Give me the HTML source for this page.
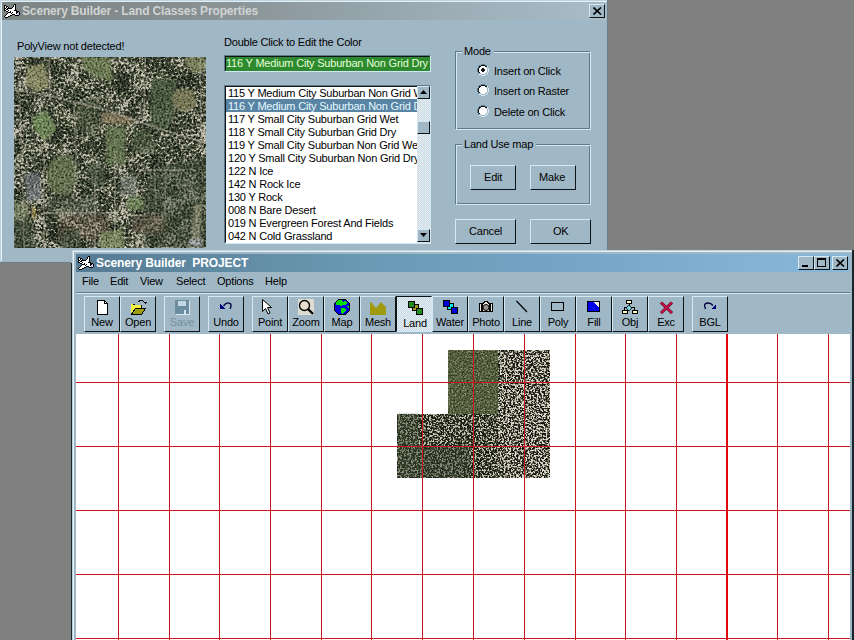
<!DOCTYPE html>
<html><head><meta charset="utf-8"><style>
html,body{margin:0;padding:0}
body{width:854px;height:640px;overflow:hidden;position:relative;background:#808080;font-family:"Liberation Sans",sans-serif}
.b,.t{position:absolute;box-sizing:border-box}
.t{white-space:pre}
</style></head><body>
<svg width="0" height="0" style="position:absolute"><defs>
<filter id="fu" x="0" y="0" width="100%" height="100%" color-interpolation-filters="sRGB">
  <feTurbulence type="fractalNoise" baseFrequency="0.06" numOctaves="2" seed="11"/>
  <feColorMatrix type="matrix" values="1 0 0 0 0  1 0 0 0 0  1 0 0 0 0  0 0 0 0 1" result="A"/>
  <feTurbulence type="fractalNoise" baseFrequency="0.4" numOctaves="3" seed="5"/>
  <feColorMatrix type="matrix" values="1 0 0 0 0  1 0 0 0 0  1 0 0 0 0  0 0 0 0 1" result="B"/>
  <feComposite in="A" in2="B" operator="arithmetic" k1="0" k2="0.55" k3="1.0" k4="-0.275" result="C"/>
  <feColorMatrix in="C" type="matrix" values="3.0 0 0 0 -1.05  3.0 0 0 0 -1.05  3.0 0 0 0 -1.05  0 0 0 0 1"/>
  <feComponentTransfer>
    <feFuncR type="table" tableValues="0.08 0.10 0.14 0.21 0.32 0.47 0.64 0.78"/>
    <feFuncG type="table" tableValues="0.11 0.14 0.18 0.25 0.35 0.48 0.63 0.76"/>
    <feFuncB type="table" tableValues="0.06 0.08 0.11 0.16 0.25 0.38 0.55 0.70"/>
  </feComponentTransfer>
</filter>
<filter id="fl" x="0" y="0" width="100%" height="100%" color-interpolation-filters="sRGB">
  <feTurbulence type="fractalNoise" baseFrequency="0.35" numOctaves="3" seed="12"/>
  <feColorMatrix type="matrix" values="4 0 0 0 -1.45  4 0 0 0 -1.45  4 0 0 0 -1.45  0 0 0 0 1"/>
  <feComponentTransfer>
    <feFuncR type="table" tableValues="0.07 0.10 0.20 0.40 0.64 0.84 0.92"/>
    <feFuncG type="table" tableValues="0.08 0.11 0.21 0.40 0.63 0.82 0.90"/>
    <feFuncB type="table" tableValues="0.05 0.08 0.16 0.34 0.56 0.76 0.86"/>
  </feComponentTransfer>
</filter>
<filter id="fg" x="0" y="0" width="100%" height="100%" color-interpolation-filters="sRGB">
  <feTurbulence type="fractalNoise" baseFrequency="0.5" numOctaves="2" seed="9"/>
  <feColorMatrix type="matrix" values="0 0 0 0 0  0 0 0 0 0  0 0 0 0 0  -5 0 0 0 2.7"/>
</filter>
<filter id="fw" x="0" y="0" width="100%" height="100%" color-interpolation-filters="sRGB">
  <feTurbulence type="fractalNoise" baseFrequency="0.5" numOctaves="2" seed="17"/>
  <feColorMatrix type="matrix" values="0 0 0 0 1  0 0 0 0 1  0 0 0 0 0.95  -6 0 0 0 3.4"/>
</filter>
<filter id="fc" x="0" y="0" width="100%" height="100%" color-interpolation-filters="sRGB">
  <feTurbulence type="fractalNoise" baseFrequency="0.55" numOctaves="3" seed="31"/>
  <feColorMatrix type="matrix" values="4 0 0 0 -1.5  4 0 0 0 -1.5  4 0 0 0 -1.5  0 0 0 0 1"/>
  <feComponentTransfer>
    <feFuncR type="table" tableValues="0.08 0.12 0.22 0.40 0.62 0.80 0.88"/>
    <feFuncG type="table" tableValues="0.09 0.13 0.23 0.40 0.61 0.78 0.86"/>
    <feFuncB type="table" tableValues="0.06 0.10 0.18 0.34 0.54 0.72 0.82"/>
  </feComponentTransfer>
</filter>
<filter id="fd" x="0" y="0" width="100%" height="100%" color-interpolation-filters="sRGB">
  <feTurbulence type="fractalNoise" baseFrequency="0.55" numOctaves="3" seed="44"/>
  <feColorMatrix type="matrix" values="4 0 0 0 -1.5  4 0 0 0 -1.5  4 0 0 0 -1.5  0 0 0 0 1"/>
  <feComponentTransfer>
    <feFuncR type="table" tableValues="0.08 0.11 0.16 0.25 0.40 0.62 0.80"/>
    <feFuncG type="table" tableValues="0.10 0.13 0.19 0.28 0.42 0.62 0.78"/>
    <feFuncB type="table" tableValues="0.06 0.08 0.12 0.20 0.34 0.55 0.72"/>
  </feComponentTransfer>
</filter>
<filter id="fe" x="0" y="0" width="100%" height="100%" color-interpolation-filters="sRGB">
  <feTurbulence type="fractalNoise" baseFrequency="0.6" numOctaves="2" seed="52"/>
  <feColorMatrix type="matrix" values="2.2 0 0 0 -0.6  2.2 0 0 0 -0.6  2.2 0 0 0 -0.6  0 0 0 0 1"/>
  <feComponentTransfer>
    <feFuncR type="table" tableValues="0.18 0.24 0.30 0.36 0.44 0.56"/>
    <feFuncG type="table" tableValues="0.22 0.28 0.34 0.40 0.48 0.60"/>
    <feFuncB type="table" tableValues="0.13 0.17 0.22 0.27 0.34 0.44"/>
  </feComponentTransfer>
</filter>
<filter id="bl"><feGaussianBlur stdDeviation="1.2"/></filter>
</defs></svg><div class="b" style="left:0px;top:0px;width:608px;height:263px;background:#a0b8c6"></div><div class="b" style="left:0px;top:262px;width:608px;height:1px;background:#6c7c88"></div><div class="b" style="left:0px;top:0px;width:608px;height:1px;background:#c0d4e0"></div><div class="b" style="left:0px;top:0px;width:1px;height:262px;background:#c0d4e0"></div><div class="b" style="left:1px;top:1px;width:606px;height:1px;background:#e4f0f8"></div><div class="b" style="left:1px;top:1px;width:1px;height:260px;background:#e4f0f8"></div><div class="b" style="left:607px;top:0px;width:1px;height:263px;background:#6c7c88"></div><div class="b" style="left:2px;top:2px;width:605px;height:18px;background:linear-gradient(90deg,#7c8484 0%,#868e90 30%,#98a8b0 65%,#a8bcc8 100%)"></div><div class="t" style="left:22px;top:5px;font-size:12px;line-height:12px;color:#d0d4d4;font-weight:bold;letter-spacing:-0.15px;">Scenery Builder - Land Classes Properties</div><div class="b" style="left:589px;top:4px;width:16px;height:14px;background:#a0b8c6;border-style:solid;border-width:1px;border-color:#d4e8f4 #0c1418 #0c1418 #d4e8f4"></div><svg class="b" style="left:593px;top:7px" width="9" height="8"><path d="M0.5 0.5L8 7.5M8 0.5L0.5 7.5" stroke="#000" stroke-width="1.6"/></svg><div class="t" style="left:17px;top:41px;font-size:11px;line-height:11px;color:#000;font-weight:normal;letter-spacing:-0.2px;">PolyView not detected!</div><div class="t" style="left:224px;top:37px;font-size:11px;line-height:11px;color:#000;font-weight:normal;letter-spacing:-0.2px;">Double Click to Edit the Color</div><svg class="b" style="left:14px;top:57px" width="192" height="191"><rect width="192" height="191" filter="url(#fu)"/><g filter="url(#bl)"><polygon points="13,10 30,6 36,28 22,35 12,27" fill="#868a5c" opacity="0.95"/><polygon points="68,0 96,0 98,24 82,20 68,9" fill="#66784a" opacity="0.95"/><polygon points="18,60 32,53 43,72 31,84 20,72" fill="#6a8850" opacity="0.95"/><polygon points="62,45 84,40 92,60 80,80 64,72" fill="#34442a" opacity="0.55"/><polygon points="171,0 190,0 192,14 178,15 171,6" fill="#788054" opacity="0.95"/><polygon points="138,22 162,22 160,60 152,74 136,70" fill="#3a4e2e" opacity="0.85"/><ellipse cx="170" cy="43" rx="12" ry="11" fill="#74744e" opacity="0.95"/><polygon points="88,55 118,60 118,68 88,66" fill="#8a7c5a" opacity="0.85"/><polygon points="91,70 111,70 111,108 93,108" fill="#5a6e44" opacity="0.9"/><polygon points="106,120 123,120 123,140 106,140" fill="#a8aca8" opacity="0.45"/><polygon points="113,140 128,140 128,153 113,153" fill="#6e8450" opacity="0.8"/><polygon points="118,74 136,72 140,96 118,96" fill="#3a4c30" opacity="0.7"/><ellipse cx="48" cy="118" rx="15" ry="20" fill="#5c6c44" opacity="0.95"/><polygon points="74,106 90,108 90,130 76,128" fill="#34442c" opacity="0.75"/><polygon points="10,118 25,115 28,140 14,145" fill="#707880" opacity="0.7"/><polygon points="0,146 14,146 14,160 0,162" fill="#74805a" opacity="0.9"/><polygon points="18,150 22,150 22,161 18,161" fill="#a89048" opacity="0.9"/><polygon points="0,162 18,162 20,191 0,191" fill="#34422c" opacity="0.6"/><polygon points="34,140 80,140 80,158 34,158" fill="#52604a" opacity="0.45"/><polygon points="44,158 96,158 96,182 44,182" fill="#7a6050" opacity="0.35"/><polygon points="86,176 108,172 110,191 86,191" fill="#7a8a58" opacity="0.9"/><polygon points="46,172 66,172 70,191 46,191" fill="#2c3a24" opacity="0.6"/><polygon points="140,110 192,100 192,191 130,191 126,150" fill="#303f28" opacity="0.5"/><ellipse cx="121" cy="146" rx="8" ry="7" fill="#6c8452" opacity="0.9"/><polygon points="118,158 150,158 150,176 118,176" fill="#7a6454" opacity="0.35"/><polygon points="180,148 188,148 186,182 178,182" fill="#8e8e70" opacity="0.8"/><polygon points="176,182 188,182 188,188 176,188" fill="#b8bcc0" opacity="0.8"/></g><g><polyline points="4,33 40,40 96,54 140,70 192,86" stroke="#b8b0a0" stroke-width="2.1" fill="none" opacity="0.55"/><polyline points="35,0 36,36" stroke="#b8b0a0" stroke-width="1.8" fill="none" opacity="0.45"/><polyline points="5,36 8,96 10,191" stroke="#b8b0a0" stroke-width="1.8" fill="none" opacity="0.40"/><polyline points="60,45 62,96 60,140" stroke="#b8b0a0" stroke-width="1.8" fill="none" opacity="0.40"/><polyline points="131,0 130,62" stroke="#b8b0a0" stroke-width="1.8" fill="none" opacity="0.45"/><polyline points="186,0 188,96" stroke="#b8b0a0" stroke-width="1.4" fill="none" opacity="0.40"/><polyline points="30,96 30,191" stroke="#b8b0a0" stroke-width="1.8" fill="none" opacity="0.45"/><polyline points="30,156 96,156" stroke="#b8b0a0" stroke-width="2.1" fill="none" opacity="0.45"/><polyline points="81,118 81,191" stroke="#b8b0a0" stroke-width="1.8" fill="none" opacity="0.45"/><polyline points="101,96 101,191" stroke="#b8b0a0" stroke-width="1.8" fill="none" opacity="0.45"/><polyline points="126,113 171,113" stroke="#b8b0a0" stroke-width="1.8" fill="none" opacity="0.45"/><polyline points="141,116 142,152" stroke="#b8b0a0" stroke-width="1.4" fill="none" opacity="0.40"/><polyline points="151,116 152,152" stroke="#b8b0a0" stroke-width="1.4" fill="none" opacity="0.40"/></g><rect width="192" height="191" fill="#141a10" filter="url(#fg)" opacity="0.45"/><rect width="192" height="191" filter="url(#fw)" opacity="0.25"/></svg><div class="b" style="left:224px;top:55px;width:207px;height:17px;background:#2e8a2e;border-style:solid;border-width:1px;border-color:#5f7a8a #d4e8f4 #d4e8f4 #5f7a8a"></div><div class="b" style="left:225px;top:56px;width:205px;height:15px;border-style:solid;border-width:1px;border-color:#0c1418 transparent transparent #0c1418"></div><div class="t" style="left:226px;top:58px;font-size:11px;line-height:11px;color:#e4ffd8;font-weight:normal;letter-spacing:-0.2px;">116 Y Medium City Suburban Non Grid Dry</div><div class="b" style="left:224px;top:85px;width:207px;height:159px;background:#fff;border-style:solid;border-width:1px;border-color:#5f7a8a #d4e8f4 #d4e8f4 #5f7a8a"></div><div class="b" style="left:225px;top:86px;width:205px;height:157px;border-style:solid;border-width:1px;border-color:#0c1418 transparent transparent #0c1418"></div><div class="b" style="left:226px;top:86px;width:191px;height:157px;overflow:hidden"><div class="t" style="left:2px;top:2px;font-size:11px;line-height:11px;color:#000;font-weight:normal;letter-spacing:-0.2px;">115 Y Medium City Suburban Non Grid Wet</div><div class="b" style="left:0px;top:13px;width:191px;height:13px;background:#5a84a4"></div><div class="t" style="left:2px;top:15px;font-size:11px;line-height:11px;color:#e4faff;font-weight:normal;letter-spacing:-0.2px;">116 Y Medium City Suburban Non Grid Dry</div><div class="t" style="left:2px;top:28px;font-size:11px;line-height:11px;color:#000;font-weight:normal;letter-spacing:-0.2px;">117 Y Small City Suburban Grid Wet</div><div class="t" style="left:2px;top:41px;font-size:11px;line-height:11px;color:#000;font-weight:normal;letter-spacing:-0.2px;">118 Y Small City Suburban Grid Dry</div><div class="t" style="left:2px;top:54px;font-size:11px;line-height:11px;color:#000;font-weight:normal;letter-spacing:-0.2px;">119 Y Small City Suburban Non Grid Wet</div><div class="t" style="left:2px;top:67px;font-size:11px;line-height:11px;color:#000;font-weight:normal;letter-spacing:-0.2px;">120 Y Small City Suburban Non Grid Dry</div><div class="t" style="left:2px;top:80px;font-size:11px;line-height:11px;color:#000;font-weight:normal;letter-spacing:-0.2px;">122 N Ice</div><div class="t" style="left:2px;top:93px;font-size:11px;line-height:11px;color:#000;font-weight:normal;letter-spacing:-0.2px;">142 N Rock Ice</div><div class="t" style="left:2px;top:106px;font-size:11px;line-height:11px;color:#000;font-weight:normal;letter-spacing:-0.2px;">130 Y Rock</div><div class="t" style="left:2px;top:119px;font-size:11px;line-height:11px;color:#000;font-weight:normal;letter-spacing:-0.2px;">008 N Bare Desert</div><div class="t" style="left:2px;top:132px;font-size:11px;line-height:11px;color:#000;font-weight:normal;letter-spacing:-0.2px;">019 N Evergreen Forest And Fields</div><div class="t" style="left:2px;top:145px;font-size:11px;line-height:11px;color:#000;font-weight:normal;letter-spacing:-0.2px;">042 N Cold Grassland</div></div><div class="b" style="left:417px;top:87px;width:13px;height:156px;background:repeating-conic-gradient(#ccdae2 0 25%, #e4eef4 0 50%) 0 0/2px 2px"></div><div class="b" style="left:417px;top:86px;width:13px;height:13px;background:#a0b8c6;border-style:solid;border-width:1px;border-color:#d4e8f4 #0c1418 #0c1418 #d4e8f4"></div><svg class="b" style="left:420px;top:90px" width="7" height="4"><path d="M3.5 0L7 4H0Z" fill="#000"/></svg><div class="b" style="left:417px;top:121px;width:13px;height:13px;background:#a0b8c6;border-style:solid;border-width:1px;border-color:#d4e8f4 #0c1418 #0c1418 #d4e8f4"></div><div class="b" style="left:417px;top:229px;width:13px;height:13px;background:#a0b8c6;border-style:solid;border-width:1px;border-color:#d4e8f4 #0c1418 #0c1418 #d4e8f4"></div><svg class="b" style="left:420px;top:233px" width="7" height="4"><path d="M0 0H7L3.5 4Z" fill="#000"/></svg><div class="b" style="left:455px;top:51px;width:135px;height:78px;border:1px solid #5f7a8a"></div><div class="b" style="left:456px;top:52px;width:135px;height:78px;border:1px solid #d4e8f4"></div><div class="b" style="left:462px;top:51px;width:32px;height:2px;background:#a0b8c6"></div><div class="t" style="left:464px;top:46px;font-size:11px;line-height:11px;color:#000;font-weight:normal;letter-spacing:-0.2px;">Mode</div><svg class="b" style="left:477px;top:64px" width="12" height="12" shape-rendering="crispEdges"><path d="M4 0h4v1h-4zM2 1h2v1h-2zM8 1h2v1h-2zM1 2h1v1h-1zM1 3h1v1h-1zM0 4h1v1h-1zM0 5h1v1h-1zM0 6h1v1h-1zM0 7h1v1h-1zM1 8h1v1h-1zM1 9h1v1h-1z" fill="#5f7a8a"/><path d="M4 1h4v1h-4zM2 2h2v1h-2zM8 2h2v1h-2zM2 3h1v1h-1zM1 4h1v1h-1zM5 4h2v1h-2zM1 5h1v1h-1zM4 5h4v1h-4zM1 6h1v1h-1zM4 6h4v1h-4zM1 7h1v1h-1zM5 7h2v1h-2zM2 8h1v1h-1z" fill="#0c1418"/><path d="M4 2h4v1h-4zM3 3h6v1h-6zM2 4h3v1h-3zM7 4h3v1h-3zM2 5h2v1h-2zM8 5h2v1h-2zM2 6h2v1h-2zM8 6h2v1h-2zM2 7h3v1h-3zM7 7h3v1h-3zM3 8h6v1h-6zM4 9h4v1h-4z" fill="#ffffff"/><path d="M9 3h1v1h-1zM10 4h1v1h-1zM10 5h1v1h-1zM10 6h1v1h-1zM10 7h1v1h-1zM9 8h1v1h-1zM2 9h2v1h-2zM8 9h2v1h-2zM4 10h4v1h-4z" fill="#a0b8c6"/><path d="M10 2h1v1h-1zM10 3h1v1h-1zM11 4h1v1h-1zM11 5h1v1h-1zM11 6h1v1h-1zM11 7h1v1h-1zM10 8h1v1h-1zM10 9h1v1h-1zM2 10h2v1h-2zM8 10h2v1h-2zM4 11h4v1h-4z" fill="#d4e8f4"/></svg><div class="t" style="left:494px;top:66px;font-size:11px;line-height:11px;color:#000;font-weight:normal;letter-spacing:-0.2px;">Insert on Click</div><svg class="b" style="left:477px;top:84px" width="12" height="12" shape-rendering="crispEdges"><path d="M4 0h4v1h-4zM2 1h2v1h-2zM8 1h2v1h-2zM1 2h1v1h-1zM1 3h1v1h-1zM0 4h1v1h-1zM0 5h1v1h-1zM0 6h1v1h-1zM0 7h1v1h-1zM1 8h1v1h-1zM1 9h1v1h-1z" fill="#5f7a8a"/><path d="M4 1h4v1h-4zM2 2h2v1h-2zM8 2h2v1h-2zM2 3h1v1h-1zM1 4h1v1h-1zM1 5h1v1h-1zM1 6h1v1h-1zM1 7h1v1h-1zM2 8h1v1h-1z" fill="#0c1418"/><path d="M4 2h4v1h-4zM3 3h6v1h-6zM2 4h8v1h-8zM2 5h8v1h-8zM2 6h8v1h-8zM2 7h8v1h-8zM3 8h6v1h-6zM4 9h4v1h-4z" fill="#ffffff"/><path d="M9 3h1v1h-1zM10 4h1v1h-1zM10 5h1v1h-1zM10 6h1v1h-1zM10 7h1v1h-1zM9 8h1v1h-1zM2 9h2v1h-2zM8 9h2v1h-2zM4 10h4v1h-4z" fill="#a0b8c6"/><path d="M10 2h1v1h-1zM10 3h1v1h-1zM11 4h1v1h-1zM11 5h1v1h-1zM11 6h1v1h-1zM11 7h1v1h-1zM10 8h1v1h-1zM10 9h1v1h-1zM2 10h2v1h-2zM8 10h2v1h-2zM4 11h4v1h-4z" fill="#d4e8f4"/></svg><div class="t" style="left:494px;top:86px;font-size:11px;line-height:11px;color:#000;font-weight:normal;letter-spacing:-0.2px;">Insert on Raster</div><svg class="b" style="left:477px;top:105px" width="12" height="12" shape-rendering="crispEdges"><path d="M4 0h4v1h-4zM2 1h2v1h-2zM8 1h2v1h-2zM1 2h1v1h-1zM1 3h1v1h-1zM0 4h1v1h-1zM0 5h1v1h-1zM0 6h1v1h-1zM0 7h1v1h-1zM1 8h1v1h-1zM1 9h1v1h-1z" fill="#5f7a8a"/><path d="M4 1h4v1h-4zM2 2h2v1h-2zM8 2h2v1h-2zM2 3h1v1h-1zM1 4h1v1h-1zM1 5h1v1h-1zM1 6h1v1h-1zM1 7h1v1h-1zM2 8h1v1h-1z" fill="#0c1418"/><path d="M4 2h4v1h-4zM3 3h6v1h-6zM2 4h8v1h-8zM2 5h8v1h-8zM2 6h8v1h-8zM2 7h8v1h-8zM3 8h6v1h-6zM4 9h4v1h-4z" fill="#ffffff"/><path d="M9 3h1v1h-1zM10 4h1v1h-1zM10 5h1v1h-1zM10 6h1v1h-1zM10 7h1v1h-1zM9 8h1v1h-1zM2 9h2v1h-2zM8 9h2v1h-2zM4 10h4v1h-4z" fill="#a0b8c6"/><path d="M10 2h1v1h-1zM10 3h1v1h-1zM11 4h1v1h-1zM11 5h1v1h-1zM11 6h1v1h-1zM11 7h1v1h-1zM10 8h1v1h-1zM10 9h1v1h-1zM2 10h2v1h-2zM8 10h2v1h-2zM4 11h4v1h-4z" fill="#d4e8f4"/></svg><div class="t" style="left:494px;top:107px;font-size:11px;line-height:11px;color:#000;font-weight:normal;letter-spacing:-0.2px;">Delete on Click</div><div class="b" style="left:455px;top:144px;width:135px;height:60px;border:1px solid #5f7a8a"></div><div class="b" style="left:456px;top:145px;width:135px;height:60px;border:1px solid #d4e8f4"></div><div class="b" style="left:462px;top:144px;width:74px;height:2px;background:#a0b8c6"></div><div class="t" style="left:464px;top:139px;font-size:11px;line-height:11px;color:#000;font-weight:normal;letter-spacing:-0.2px;">Land Use map</div><div class="b" style="left:470px;top:165px;width:46px;height:25px;background:#a0b8c6;border-style:solid;border-width:1px;border-color:#d4e8f4 #0c1418 #0c1418 #d4e8f4"></div><div class="t" style="left:484px;top:172px;font-size:11px;line-height:11px;color:#000;font-weight:normal;letter-spacing:-0.2px;">Edit</div><div class="b" style="left:530px;top:165px;width:46px;height:25px;background:#a0b8c6;border-style:solid;border-width:1px;border-color:#d4e8f4 #0c1418 #0c1418 #d4e8f4"></div><div class="t" style="left:539px;top:172px;font-size:11px;line-height:11px;color:#000;font-weight:normal;letter-spacing:-0.2px;">Make</div><div class="b" style="left:455px;top:219px;width:61px;height:25px;background:#a0b8c6;border-style:solid;border-width:1px;border-color:#d4e8f4 #0c1418 #0c1418 #d4e8f4"></div><div class="t" style="left:469px;top:226px;font-size:11px;line-height:11px;color:#000;font-weight:normal;letter-spacing:-0.2px;">Cancel</div><div class="b" style="left:530px;top:219px;width:61px;height:25px;background:#a0b8c6;border-style:solid;border-width:1px;border-color:#d4e8f4 #0c1418 #0c1418 #d4e8f4"></div><div class="t" style="left:553px;top:226px;font-size:11px;line-height:11px;color:#000;font-weight:normal;letter-spacing:-0.2px;">OK</div><div class="b" style="left:71px;top:250px;width:783px;height:390px;background:#a0b8c6"></div><div class="b" style="left:72px;top:250px;width:782px;height:1px;background:#c0d4e0"></div><div class="b" style="left:72px;top:251px;width:780px;height:1px;background:#e4f0f8"></div><div class="b" style="left:71px;top:263px;width:1px;height:377px;background:#1c2830"></div><div class="b" style="left:72px;top:251px;width:1px;height:389px;background:#c0d4e0"></div><div class="b" style="left:73px;top:252px;width:1px;height:388px;background:#e4f0f8"></div><div class="b" style="left:852px;top:250px;width:2px;height:390px;background:#18242c"></div><div class="b" style="left:76px;top:254px;width:773px;height:18px;background:linear-gradient(90deg,#567a94 0%,#6490a8 26%,#6898b2 35%,#74a4c4 61%,#82b2d4 87%,#88b8d8 100%)"></div><svg class="b" style="left:77px;top:255px" width="18" height="16" shape-rendering="crispEdges"><path d="M11 1h2v1h-2zM1 2h2v1h-2zM10 2h1v1h-1zM12 2h1v1h-1zM1 3h1v1h-1zM3 3h2v1h-2zM10 3h1v1h-1zM12 3h1v1h-1zM1 4h1v1h-1zM3 4h1v1h-1zM5 4h1v1h-1zM9 4h1v1h-1zM12 4h1v1h-1zM1 5h2v1h-2zM4 5h5v1h-5zM12 5h1v1h-1zM1 6h1v1h-1zM3 6h2v1h-2zM12 6h1v1h-1zM1 7h2v1h-2zM5 7h1v1h-1zM11 7h3v1h-3zM3 8h2v1h-2zM7 8h1v1h-1zM13 8h3v1h-3zM5 9h3v1h-3zM9 9h1v1h-1zM13 9h2v1h-2zM16 9h1v1h-1zM4 10h1v1h-1zM8 10h1v1h-1zM13 10h1v1h-1zM16 10h1v1h-1zM3 11h1v1h-1zM9 11h3v1h-3zM16 11h1v1h-1zM2 12h1v1h-1zM7 12h2v1h-2zM12 12h4v1h-4zM1 13h1v1h-1zM5 13h2v1h-2zM2 14h3v1h-3z" fill="#000"/><path d="M11 2h1v1h-1zM2 3h1v1h-1zM11 3h1v1h-1zM2 4h1v1h-1zM4 4h1v1h-1zM10 4h2v1h-2zM3 5h1v1h-1zM9 5h3v1h-3zM2 6h1v1h-1zM5 6h7v1h-7zM3 7h2v1h-2zM6 7h5v1h-5zM5 8h2v1h-2zM8 8h5v1h-5zM8 9h1v1h-1zM10 9h3v1h-3zM5 10h3v1h-3zM9 10h4v1h-4zM4 11h5v1h-5zM12 11h2v1h-2zM3 12h4v1h-4zM2 13h3v1h-3z" fill="#fff"/><path d="M15 9h1v1h-1zM14 10h2v1h-2zM14 11h2v1h-2z" fill="#c8c8f8"/></svg><div class="t" style="left:96px;top:257px;font-size:12px;line-height:12px;color:#fff;font-weight:bold;letter-spacing:-0.1px;">Scenery Builder&nbsp; PROJECT</div><div class="b" style="left:798px;top:256px;width:16px;height:14px;background:#a0b8c6;border-style:solid;border-width:1px;border-color:#d4e8f4 #0c1418 #0c1418 #d4e8f4"></div><div class="b" style="left:802px;top:265px;width:6px;height:2px;background:#000"></div><div class="b" style="left:814px;top:256px;width:16px;height:14px;background:#a0b8c6;border-style:solid;border-width:1px;border-color:#d4e8f4 #0c1418 #0c1418 #d4e8f4"></div><div class="b" style="left:817px;top:258px;width:9px;height:9px;border:1px solid #000;border-top-width:2px"></div><div class="b" style="left:832px;top:256px;width:16px;height:14px;background:#a0b8c6;border-style:solid;border-width:1px;border-color:#d4e8f4 #0c1418 #0c1418 #d4e8f4"></div><svg class="b" style="left:836px;top:259px" width="9" height="8"><path d="M0.5 0.5L8 7.5M8 0.5L0.5 7.5" stroke="#000" stroke-width="1.6"/></svg><div class="t" style="left:82px;top:276px;font-size:11px;line-height:11px;color:#000;font-weight:normal;letter-spacing:-0.2px;">File</div><div class="t" style="left:110px;top:276px;font-size:11px;line-height:11px;color:#000;font-weight:normal;letter-spacing:-0.2px;">Edit</div><div class="t" style="left:140px;top:276px;font-size:11px;line-height:11px;color:#000;font-weight:normal;letter-spacing:-0.2px;">View</div><div class="t" style="left:176px;top:276px;font-size:11px;line-height:11px;color:#000;font-weight:normal;letter-spacing:-0.2px;">Select</div><div class="t" style="left:217px;top:276px;font-size:11px;line-height:11px;color:#000;font-weight:normal;letter-spacing:-0.2px;">Options</div><div class="t" style="left:265px;top:276px;font-size:11px;line-height:11px;color:#000;font-weight:normal;letter-spacing:-0.2px;">Help</div><div class="b" style="left:76px;top:292px;width:774px;height:1px;background:#5f7a8a"></div><div class="b" style="left:76px;top:293px;width:774px;height:1px;background:#d4e8f4"></div><div class="b" style="left:84px;top:296px;width:36px;height:36px;border-style:solid;border-width:1px;border-color:#d4e8f4 #0c1418 #0c1418 #d4e8f4"></div><div class="t" style="left:84px;top:317px;width:36px;text-align:center;font-size:11px;line-height:11px;color:#000;letter-spacing:-0.2px">New</div><div class="b" style="left:120px;top:296px;width:36px;height:36px;border-style:solid;border-width:1px;border-color:#d4e8f4 #0c1418 #0c1418 #d4e8f4"></div><div class="t" style="left:120px;top:317px;width:36px;text-align:center;font-size:11px;line-height:11px;color:#000;letter-spacing:-0.2px">Open</div><div class="b" style="left:164px;top:296px;width:36px;height:36px;border-style:solid;border-width:1px;border-color:#d4e8f4 #0c1418 #0c1418 #d4e8f4"></div><div class="t" style="left:164px;top:317px;width:36px;text-align:center;font-size:11px;line-height:11px;color:#7890a0;letter-spacing:-0.2px">Save</div><div class="b" style="left:208px;top:296px;width:36px;height:36px;border-style:solid;border-width:1px;border-color:#d4e8f4 #0c1418 #0c1418 #d4e8f4"></div><div class="t" style="left:208px;top:317px;width:36px;text-align:center;font-size:11px;line-height:11px;color:#000;letter-spacing:-0.2px">Undo</div><div class="b" style="left:252px;top:296px;width:36px;height:36px;border-style:solid;border-width:1px;border-color:#d4e8f4 #0c1418 #0c1418 #d4e8f4"></div><div class="t" style="left:252px;top:317px;width:36px;text-align:center;font-size:11px;line-height:11px;color:#000;letter-spacing:-0.2px">Point</div><div class="b" style="left:288px;top:296px;width:36px;height:36px;border-style:solid;border-width:1px;border-color:#d4e8f4 #0c1418 #0c1418 #d4e8f4"></div><div class="t" style="left:288px;top:317px;width:36px;text-align:center;font-size:11px;line-height:11px;color:#000;letter-spacing:-0.2px">Zoom</div><div class="b" style="left:324px;top:296px;width:36px;height:36px;border-style:solid;border-width:1px;border-color:#d4e8f4 #0c1418 #0c1418 #d4e8f4"></div><div class="t" style="left:324px;top:317px;width:36px;text-align:center;font-size:11px;line-height:11px;color:#000;letter-spacing:-0.2px">Map</div><div class="b" style="left:360px;top:296px;width:36px;height:36px;border-style:solid;border-width:1px;border-color:#d4e8f4 #0c1418 #0c1418 #d4e8f4"></div><div class="t" style="left:360px;top:317px;width:36px;text-align:center;font-size:11px;line-height:11px;color:#000;letter-spacing:-0.2px">Mesh</div><div class="b" style="left:396px;top:296px;width:36px;height:36px;background:repeating-conic-gradient(#c4d4de 0 25%, #e8f2f8 0 50%) 0 0/2px 2px"></div><div class="b" style="left:396px;top:296px;width:36px;height:36px;border-style:solid;border-width:1px;border-color:#0c1418 #d4e8f4 #d4e8f4 #0c1418"></div><div class="t" style="left:397px;top:318px;width:36px;text-align:center;font-size:11px;line-height:11px;color:#000;letter-spacing:-0.2px">Land</div><div class="b" style="left:432px;top:296px;width:36px;height:36px;border-style:solid;border-width:1px;border-color:#d4e8f4 #0c1418 #0c1418 #d4e8f4"></div><div class="t" style="left:432px;top:317px;width:36px;text-align:center;font-size:11px;line-height:11px;color:#000;letter-spacing:-0.2px">Water</div><div class="b" style="left:468px;top:296px;width:36px;height:36px;border-style:solid;border-width:1px;border-color:#d4e8f4 #0c1418 #0c1418 #d4e8f4"></div><div class="t" style="left:468px;top:317px;width:36px;text-align:center;font-size:11px;line-height:11px;color:#000;letter-spacing:-0.2px">Photo</div><div class="b" style="left:504px;top:296px;width:36px;height:36px;border-style:solid;border-width:1px;border-color:#d4e8f4 #0c1418 #0c1418 #d4e8f4"></div><div class="t" style="left:504px;top:317px;width:36px;text-align:center;font-size:11px;line-height:11px;color:#000;letter-spacing:-0.2px">Line</div><div class="b" style="left:540px;top:296px;width:36px;height:36px;border-style:solid;border-width:1px;border-color:#d4e8f4 #0c1418 #0c1418 #d4e8f4"></div><div class="t" style="left:540px;top:317px;width:36px;text-align:center;font-size:11px;line-height:11px;color:#000;letter-spacing:-0.2px">Poly</div><div class="b" style="left:576px;top:296px;width:36px;height:36px;border-style:solid;border-width:1px;border-color:#d4e8f4 #0c1418 #0c1418 #d4e8f4"></div><div class="t" style="left:576px;top:317px;width:36px;text-align:center;font-size:11px;line-height:11px;color:#000;letter-spacing:-0.2px">Fill</div><div class="b" style="left:612px;top:296px;width:36px;height:36px;border-style:solid;border-width:1px;border-color:#d4e8f4 #0c1418 #0c1418 #d4e8f4"></div><div class="t" style="left:612px;top:317px;width:36px;text-align:center;font-size:11px;line-height:11px;color:#000;letter-spacing:-0.2px">Obj</div><div class="b" style="left:648px;top:296px;width:36px;height:36px;border-style:solid;border-width:1px;border-color:#d4e8f4 #0c1418 #0c1418 #d4e8f4"></div><div class="t" style="left:648px;top:317px;width:36px;text-align:center;font-size:11px;line-height:11px;color:#000;letter-spacing:-0.2px">Exc</div><div class="b" style="left:692px;top:296px;width:36px;height:36px;border-style:solid;border-width:1px;border-color:#d4e8f4 #0c1418 #0c1418 #d4e8f4"></div><div class="t" style="left:692px;top:317px;width:36px;text-align:center;font-size:11px;line-height:11px;color:#000;letter-spacing:-0.2px">BGL</div><svg class="b" style="left:0;top:0" width="854" height="640" shape-rendering="crispEdges"><path d="M97.5 300.5H104.5L107.5 303.5V314.5H97.5Z" fill="#fff" stroke="#000"/><path d="M104.5 300.5V303.5H107.5" fill="none" stroke="#000"/><path d="M130.5 303.5H133.5L134.5 304.5H141.5V307.5H145.5L141.5 314.5H130.5Z" fill="#000"/><path d="M131 304H133V305H141V308H135L132 313H131Z" fill="#f0f040"/><path d="M135.5 308.5H145.5L141.5 314.5H131.5Z" fill="#9c9c10" stroke="#000"/><path d="M138.5 302.5L139.5 300.5H142.5L144.5 302.5" fill="none" stroke="#000"/><path d="M143 302H147L146 305Z" fill="#000"/><rect x="176" y="301" width="14" height="14" fill="#d8e8f0"/><rect x="175" y="300" width="14" height="14" fill="#6c8ca0"/><rect x="178" y="301" width="8" height="5" fill="#c4d8e4"/><rect x="184" y="310" width="2" height="4" fill="#d8e8f0"/><path d="M220 304L225 309H220Z" fill="#000080"/><path d="M223.5 306 Q226 302.5 228.5 303 Q231.5 303.5 231 306.5 L230 309" fill="none" stroke="#000040" stroke-width="1.3" shape-rendering="auto"/><path d="M262.5 299.5V311.5L265.5 308.5L268 314L270 313L267.5 307.5H271.5Z" fill="#fff" stroke="#000" shape-rendering="auto" stroke-linejoin="miter"/><rect x="298" y="299" width="16" height="16" fill="#dcdcd0"/><circle cx="304.5" cy="305.5" r="5" fill="#e8dccc" stroke="#000" stroke-width="1.4" shape-rendering="auto"/><path d="M308 309L313 314" stroke="#000" stroke-width="2.4" shape-rendering="auto"/><path d="M338.5 299.5H345.5L349.5 303.5V310.5L345.5 314.5H338.5L334.5 310.5V303.5Z" fill="#0000e0" stroke="#000"/><path d="M336 303L338 300H342L343 302L345 301L347 303L346 305L343 305L341 306L338 305L336 305Z" fill="#00e000"/><path d="M341 308H345L346 310L344 312L343 314H342L341 311Z" fill="#00e000"/><path d="M347 306H349V309L348 308Z" fill="#00e000"/><path d="M370 315V303L371 302L376 308L381 302L386 307V315Z" fill="#a09a10" shape-rendering="auto"/><rect x="412.5" y="304.5" width="6" height="6" fill="#a09a20" stroke="#000"/><rect x="408.5" y="301.5" width="6" height="6" fill="#208c20" stroke="#000"/><rect x="416.5" y="308.5" width="6" height="6" fill="#208c20" stroke="#000"/><rect x="447.5" y="303.5" width="6" height="6" fill="#00e8f0" stroke="#000"/><rect x="443.5" y="300.5" width="6" height="6" fill="#0000d8" stroke="#000"/><rect x="451.5" y="307.5" width="6" height="6" fill="#0000d8" stroke="#000"/><path d="M479.5 303.5H483.5L484.5 301.5H487.5L488.5 303.5H492.5V311.5H479.5Z" fill="#e8e8e8" stroke="#000"/><rect x="481" y="304" width="2" height="7" fill="#000"/><rect x="489" y="304" width="2" height="7" fill="#000"/><circle cx="486" cy="307.5" r="3" fill="#9a9490" stroke="#000" shape-rendering="auto"/><path d="M516.5 301L527 312" stroke="#000" stroke-width="1.2" shape-rendering="auto"/><rect x="551.5" y="302.5" width="12" height="8" fill="none" stroke="#000"/><rect x="587.5" y="301.5" width="12" height="10" fill="#0000f0" stroke="#000"/><path d="M593 302H599V308Z" fill="#e8e8e8"/><path d="M629 304V307M624.5 310V307.5H634.5V310" fill="none" stroke="#000"/><path d="M629 305L632 308L629 311L626 308Z" fill="#80d0e0" stroke="#000" stroke-width="0.8" shape-rendering="auto"/><rect x="626.5" y="300.5" width="5" height="3" fill="#ffffc0" stroke="#000"/><rect x="622.5" y="310.5" width="5" height="3" fill="#ffffc0" stroke="#000"/><rect x="632.5" y="310.5" width="5" height="3" fill="#ffffc0" stroke="#000"/><path d="M661 302.5L672 313M672 302.5L661 313" stroke="#400010" stroke-width="3" shape-rendering="auto"/><path d="M661 302.5L672 313M672 302.5L661 313" stroke="#c8104a" stroke-width="2" shape-rendering="auto"/><path d="M705.5 309 L704.5 306 Q704.5 303 708 303 Q711 303 713 305.5" fill="none" stroke="#000040" stroke-width="1.3" shape-rendering="auto"/><path d="M716 304V309H711Z" fill="#000080"/></svg><div class="b" style="left:76px;top:334px;width:774px;height:306px;background:#fff"></div><svg class="b" style="left:397px;top:350px" width="153" height="128"><rect x="51" y="0" width="50" height="64" filter="url(#fe)"/><rect x="101" y="0" width="52" height="128" filter="url(#fc)"/><rect x="0" y="64" width="101" height="64" filter="url(#fd)"/><g filter="url(#bl)"><polygon points="0,64 22,64 22,128 0,128" fill="#3c4a30" opacity="0.45"/><polygon points="22,96 73,96 73,128 22,128" fill="#30402a" opacity="0.45"/></g></svg><svg class="b" style="left:76px;top:334px" width="774" height="306" shape-rendering="crispEdges"><rect x="42" y="0" width="1" height="306" fill="#c8141c"/><rect x="93" y="0" width="1" height="306" fill="#c8141c"/><rect x="143" y="0" width="1" height="306" fill="#c8141c"/><rect x="194" y="0" width="1" height="306" fill="#c8141c"/><rect x="245" y="0" width="1" height="306" fill="#c8141c"/><rect x="295" y="0" width="1" height="306" fill="#c8141c"/><rect x="346" y="0" width="1" height="306" fill="#c8141c"/><rect x="397" y="0" width="1" height="306" fill="#c8141c"/><rect x="448" y="0" width="1" height="306" fill="#c8141c"/><rect x="499" y="0" width="1" height="306" fill="#c8141c"/><rect x="549" y="0" width="1" height="306" fill="#c8141c"/><rect x="600" y="0" width="1" height="306" fill="#c8141c"/><rect x="701" y="0" width="1" height="306" fill="#c8141c"/><rect x="752" y="0" width="1" height="306" fill="#c8141c"/><rect x="650" y="0" width="2" height="306" fill="#e00808"/><rect x="0" y="48" width="774" height="1" fill="#c8141c"/><rect x="0" y="112" width="774" height="1" fill="#c8141c"/><rect x="0" y="176" width="774" height="1" fill="#c8141c"/><rect x="0" y="240" width="774" height="1" fill="#c8141c"/><rect x="0" y="304" width="774" height="1" fill="#c8141c"/></svg><svg class="b" style="left:3px;top:3px" width="18" height="16" shape-rendering="crispEdges"><path d="M11 1h2v1h-2zM1 2h2v1h-2zM10 2h1v1h-1zM12 2h1v1h-1zM1 3h1v1h-1zM3 3h2v1h-2zM10 3h1v1h-1zM12 3h1v1h-1zM1 4h1v1h-1zM3 4h1v1h-1zM5 4h1v1h-1zM9 4h1v1h-1zM12 4h1v1h-1zM1 5h2v1h-2zM4 5h5v1h-5zM12 5h1v1h-1zM1 6h1v1h-1zM3 6h2v1h-2zM12 6h1v1h-1zM1 7h2v1h-2zM5 7h1v1h-1zM11 7h3v1h-3zM3 8h2v1h-2zM7 8h1v1h-1zM13 8h3v1h-3zM5 9h3v1h-3zM9 9h1v1h-1zM13 9h2v1h-2zM16 9h1v1h-1zM4 10h1v1h-1zM8 10h1v1h-1zM13 10h1v1h-1zM16 10h1v1h-1zM3 11h1v1h-1zM9 11h3v1h-3zM16 11h1v1h-1zM2 12h1v1h-1zM7 12h2v1h-2zM12 12h4v1h-4zM1 13h1v1h-1zM5 13h2v1h-2zM2 14h3v1h-3z" fill="#000"/><path d="M11 2h1v1h-1zM2 3h1v1h-1zM11 3h1v1h-1zM2 4h1v1h-1zM4 4h1v1h-1zM10 4h2v1h-2zM3 5h1v1h-1zM9 5h3v1h-3zM2 6h1v1h-1zM5 6h7v1h-7zM3 7h2v1h-2zM6 7h5v1h-5zM5 8h2v1h-2zM8 8h5v1h-5zM8 9h1v1h-1zM10 9h3v1h-3zM5 10h3v1h-3zM9 10h4v1h-4zM4 11h5v1h-5zM12 11h2v1h-2zM3 12h4v1h-4zM2 13h3v1h-3z" fill="#fff"/><path d="M15 9h1v1h-1zM14 10h2v1h-2zM14 11h2v1h-2z" fill="#c8c8f8"/></svg>
</body></html>
